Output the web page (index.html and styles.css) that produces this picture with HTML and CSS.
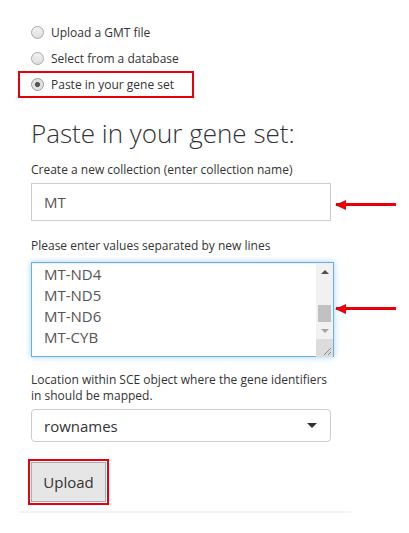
FILE: index.html
```html
<!DOCTYPE html>
<html>
<head>
<meta charset="utf-8">
<link rel="stylesheet" href="styles.css">
</head>
<body>
<div class="panel">
  <div class="radios">
    <label class="radio-row"><input type="radio" name="src" class="radio"><span>Upload a GMT file</span></label>
    <label class="radio-row"><input type="radio" name="src" class="radio"><span>Select from a database</span></label>
    <label class="radio-row hl"><input type="radio" name="src" class="radio" checked><span>Paste in your gene set</span></label>
  </div>

  <h3 class="title">Paste in your gene set:</h3>

  <div class="field f-name">
    <label class="field-label">Create a new collection (enter collection name)</label>
    <div class="ctl">
      <input class="text-input" type="text" value="MT">
      <span class="arrow arrow-1"></span>
    </div>
  </div>

  <div class="field f-values">
    <label class="field-label">Please enter values separated by new lines</label>
    <div class="ctl">
      <div class="ta-wrap">
        <textarea class="ta">MT-ND4
MT-ND5
MT-ND6
MT-CYB</textarea>
        <div class="sbar">
          <div class="sb-up"></div>
          <div class="sb-track"><div class="sb-thumb"></div></div>
          <div class="sb-down"></div>
          <div class="sb-corner">
            <svg width="17" height="18" viewBox="0 0 17 18"><path d="M8 16 L15 9 M12 16 L15 13" stroke="#888" stroke-width="1" fill="none"/></svg>
          </div>
        </div>
      </div>
      <span class="arrow arrow-2"></span>
    </div>
  </div>

  <div class="field f-loc">
    <label class="field-label">Location within SCE object where the gene identifiers in should be mapped.</label>
    <div class="select">
      <span>rownames</span>
      <span class="caret"></span>
    </div>
  </div>

  <div class="btn-hl">
    <button class="btn">Upload</button>
  </div>
  <div class="rule"></div>
</div>
</body>
</html>
```
FILE: styles.css
```css
html, body {
  margin: 0;
  padding: 0;
  background: #fff;
}
body {
  font-family: "Open Sans", "Liberation Sans", sans-serif;
  color: #333;
}
.panel {
  margin-left: 19px;
  width: 332px;
  padding: 19px 0 0 12px;
  box-sizing: border-box;
}
.radios {
  display: flex;
  flex-direction: column;
}
.radio-row {
  display: flex;
  align-items: center;
  height: 26px;
  font-size: 12px;
  color: #333;
  gap: 7px;
}
.radio-row.hl {
  box-sizing: border-box;
  height: 27px;
  width: 176px;
  margin-left: -13px;
  padding-left: 11px;
  border: 2px solid #e8000b;
}
.radio {
  appearance: none;
  -webkit-appearance: none;
  margin: 0;
  width: 13px;
  height: 13px;
  border-radius: 50%;
  border: 1px solid #a9a9a9;
  background: linear-gradient(#f2f2f2, #dedede);
  box-sizing: border-box;
  flex: none;
}
.radio:checked {
  background: radial-gradient(circle, #555 0 2.2px, #dcdcdc 2.8px, #ececec 100%);
  border-color: #9a9a9a;
}
.title {
  margin: 19px 0 0 0;
  font-size: 26px;
  font-weight: 300;
  line-height: 32px;
  color: #333;
}
.field {
  display: flex;
  flex-direction: column;
}
.field-label {
  font-size: 12px;
  line-height: 16px;
  color: #333;
}
.f-name .field-label {
  margin: 13px 0 5px 0;
}
.f-values .field-label {
  margin: 17px 0 8px 0;
}
.f-loc .field-label {
  margin: 15px 0 5px 0;
  width: 300px;
}
.ctl {
  position: relative;
}
.text-input {
  display: block;
  box-sizing: border-box;
  width: 300px;
  height: 38px;
  margin: 0;
  padding: 0 12px;
  border: 1px solid #ccc;
  border-radius: 0;
  font-family: inherit;
  font-size: 15px;
  color: #555;
  outline: none;
}
.ta-wrap {
  position: relative;
  width: 303px;
  height: 95px;
}
.ta {
  display: block;
  box-sizing: border-box;
  width: 303px;
  height: 95px;
  margin: 0;
  padding: 1px 30px 0 12px;
  border: 1px solid #66afe9;
  box-shadow: inset 0 1px 1px rgba(0,0,0,.075), 0 0 6px rgba(102,175,233,.6);
  border-radius: 0;
  font-family: inherit;
  font-size: 15px;
  line-height: 21px;
  color: #555;
  resize: none;
  overflow: hidden;
  outline: none;
}
.sbar {
  position: absolute;
  top: 1px;
  right: 1px;
  bottom: 1px;
  width: 17px;
  display: flex;
  flex-direction: column;
  background: #f1f1f1;
}
.sb-up, .sb-down {
  height: 17px;
  flex: none;
  display: flex;
  justify-content: center;
  align-items: center;
}
.sb-up::before {
  content: "";
  border-left: 4px solid transparent;
  border-right: 4px solid transparent;
  border-bottom: 4px solid #505050;
}
.sb-down::before {
  content: "";
  border-left: 4px solid transparent;
  border-right: 4px solid transparent;
  border-top: 4px solid #a3a3a3;
}
.sb-track {
  flex: 1;
}
.sb-thumb {
  margin: 25px 2px 0 2px;
  height: 17px;
  background: #c1c1c1;
}
.sb-corner {
  height: 18px;
  flex: none;
  background: #dcdcdc;
}
.sb-corner svg {
  display: block;
}
.arrow {
  position: absolute;
  left: 305px;
  width: 60px;
  height: 3px;
  background: #e8000b;
}
.arrow::before {
  content: "";
  position: absolute;
  left: -1px;
  top: -3.5px;
  border-top: 5px solid transparent;
  border-bottom: 5px solid transparent;
  border-right: 11px solid #e8000b;
}
.arrow-1 {
  top: 20px;
}
.arrow-2 {
  top: 45px;
}
.select {
  box-sizing: border-box;
  width: 300px;
  height: 33px;
  border: 1px solid #ccc;
  border-radius: 4px;
  display: flex;
  align-items: center;
  justify-content: space-between;
  padding: 0 13px 0 12px;
  font-size: 15px;
  color: #333;
}
.caret {
  border-left: 5px solid transparent;
  border-right: 5px solid transparent;
  border-top: 5px solid #333;
}
.btn-hl {
  display: flex;
  width: fit-content;
  margin: 17px 0 0 -3px;
  border: 2px solid #e8000b;
  padding: 1px;
}
.btn {
  display: block;
  box-sizing: border-box;
  width: 75px;
  height: 40px;
  margin: 0;
  padding: 0;
  background: #e6e6e6;
  border: 1px solid #adadad;
  border-radius: 0;
  font-family: inherit;
  font-size: 15px;
  color: #333;
}
.rule {
  margin: 6px 0 0 -12px;
  width: 332px;
  height: 2px;
  background: #f3f3f3;
}
```
